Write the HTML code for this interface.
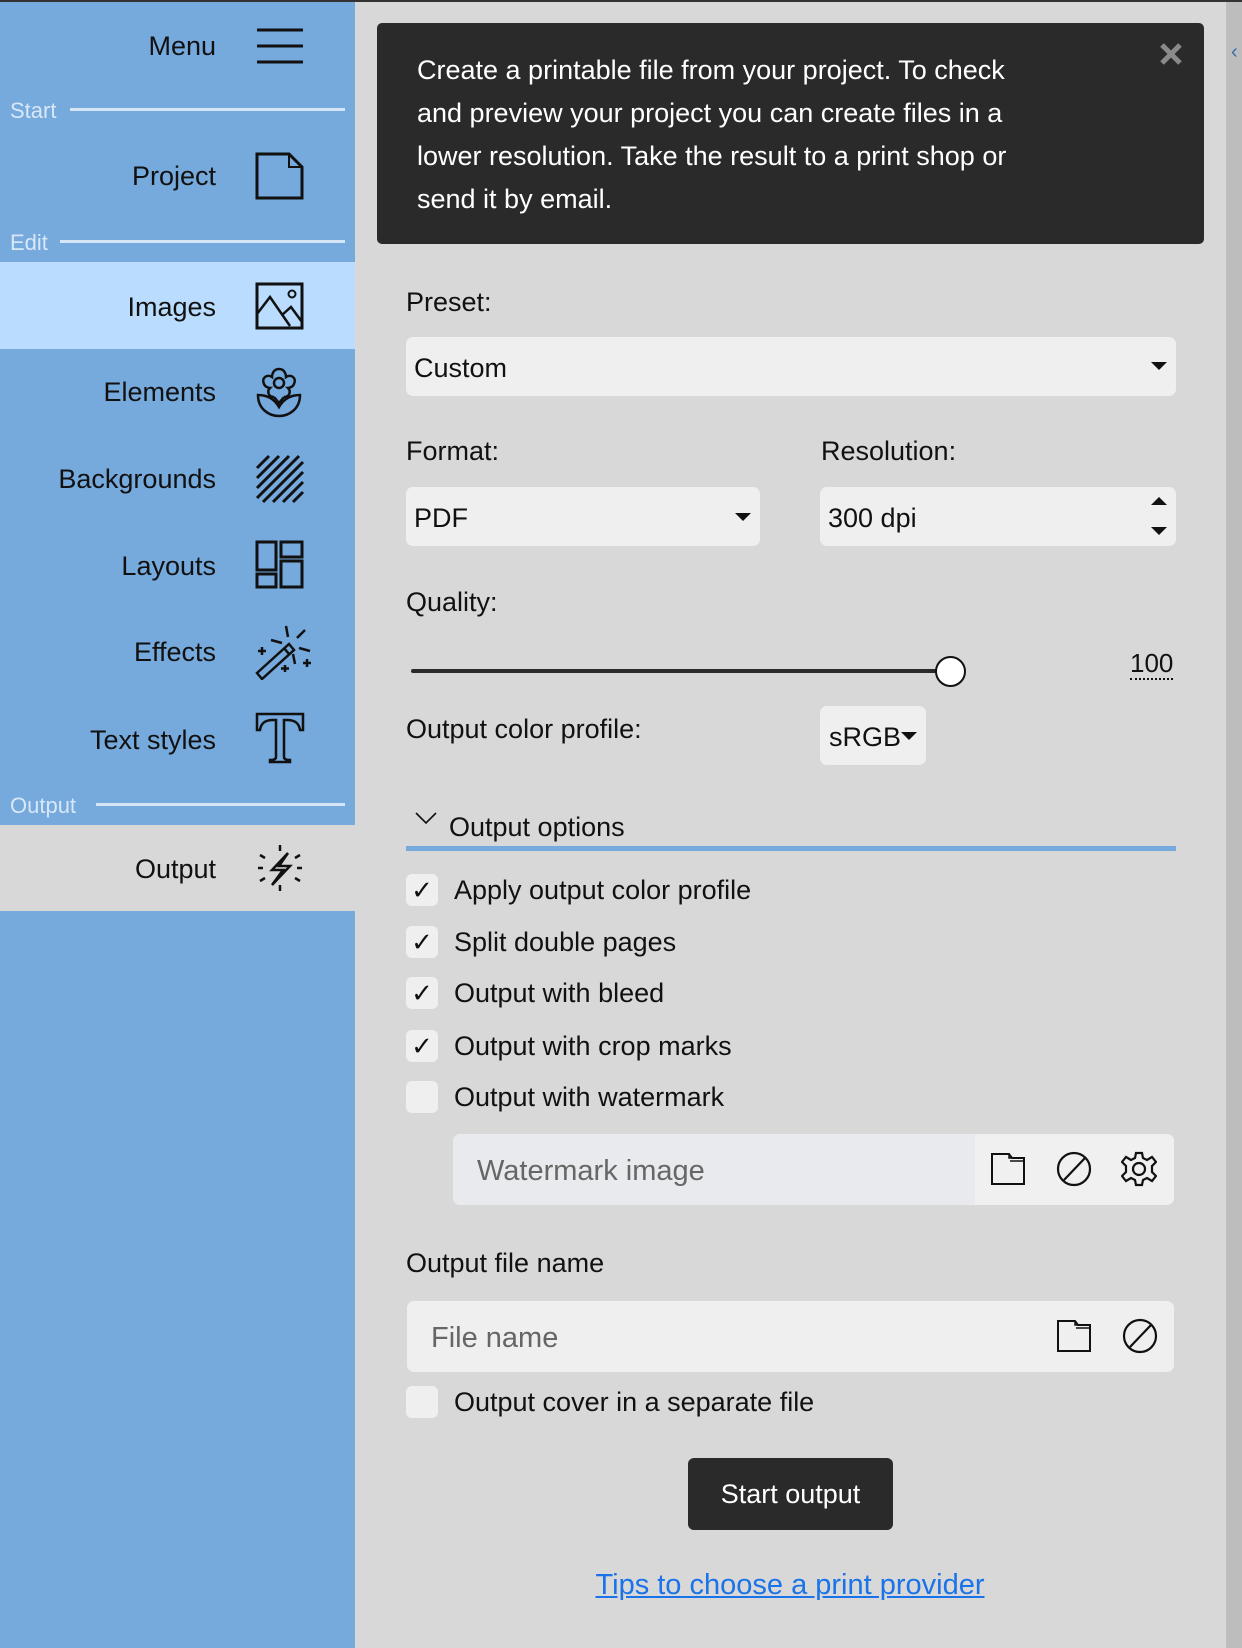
<!DOCTYPE html>
<html><head><meta charset="utf-8"><style>
*{margin:0;padding:0;box-sizing:border-box}
body{width:1242px;height:1648px;position:relative;overflow:hidden;background:#d8d8d8;font-family:"Liberation Sans",sans-serif;color:#111;font-size:27px}
.a{position:absolute}
#side{left:0;top:0;width:355px;height:1648px;background:#76a9dc}
.lbl{position:absolute;right:139px;font-size:27px;line-height:32px;color:#111;white-space:nowrap}
.sec{position:absolute;left:10px;font-size:22px;color:#d8e8f8;line-height:26px}
.secl{position:absolute;height:3px;background:#d6e6f7;right:10px}
.ic{position:absolute;left:255px}
.t{position:absolute;white-space:nowrap;line-height:32px}
.box{position:absolute;background:#efefef;border-radius:7px}
.cb{position:absolute;left:406px;width:32px;height:32px;background:#efefef;border-radius:6px;font-size:26px;text-align:center;line-height:32px}
.tri{position:absolute;width:0;height:0;border-left:8px solid transparent;border-right:8px solid transparent;border-top:8px solid #111}
</style></head><body>
<div class="a" style="left:0;top:0;width:1242px;height:2px;background:#333;z-index:5"></div>
<div class="a" id="side">
 <div class="lbl" style="top:30px">Menu</div>
 <svg class="ic" style="top:26px" width="50" height="40"><path d="M2 4H48M2 20H48M2 36H48" stroke="#111" stroke-width="3"/></svg>
 <div class="sec" style="top:98px">Start</div><div class="secl" style="left:70px;top:108px"></div>
 <div class="lbl" style="top:160px">Project</div>
 <svg class="ic" style="top:152px" width="50" height="48"><path d="M2 2H34L47 15V46H2Z" fill="none" stroke="#111" stroke-width="3"/><path d="M34 2V15H47" fill="none" stroke="#111" stroke-width="2"/></svg>
 <div class="sec" style="top:230px">Edit</div><div class="secl" style="left:60px;top:240px"></div>
 <div class="a" style="left:0;top:262px;width:355px;height:87px;background:#b9dcff"></div>
 <div class="lbl" style="top:291px">Images</div>
 <svg class="ic" style="top:282px" width="50" height="48"><rect x="2" y="2" width="45" height="44" fill="none" stroke="#111" stroke-width="3"/><path d="M2 32L15 15L35 44M27 33L36 25L47 40" fill="none" stroke="#111" stroke-width="2.5"/><circle cx="37" cy="12" r="3.5" fill="none" stroke="#111" stroke-width="2"/></svg>
 <div class="lbl" style="top:376px">Elements</div>
 <svg class="ic" style="top:365px" width="50" height="54"><g fill="none" stroke="#111" stroke-width="2.5"><circle cx="24" cy="18" r="5"/><path d="M24 4C30 4 31 10 31 12C35 9 42 12 39 19C38 22 34 23 33 23C36 26 35 32 29 32M24 4C18 4 17 10 17 12C13 9 6 12 9 19C10 22 14 23 15 23C12 26 13 32 19 32"/><path d="M3 30C3 44 14 51 24 51C34 51 45 44 45 30C35 30 28 35 24 42C20 35 13 30 3 30Z"/><path d="M19 32L24 38L29 32"/></g></svg>
 <div class="lbl" style="top:463px">Backgrounds</div>
 <svg class="ic" style="top:454px" width="52" height="52"><path d="M2 14L14 2M2 24L24 2M2 34L34 2M2 44L44 2M8 48L48 8M18 48L48 18M28 48L48 28M38 48L48 38" stroke="#111" stroke-width="3"/></svg>
 <div class="lbl" style="top:550px">Layouts</div>
 <svg class="ic" style="top:540px" width="50" height="50"><g fill="none" stroke="#111" stroke-width="3"><rect x="2" y="2" width="19" height="28"/><rect x="2" y="34" width="19" height="13"/><rect x="26" y="2" width="21" height="15"/><rect x="26" y="21" width="21" height="26"/></g></svg>
 <div class="lbl" style="top:636px">Effects</div>
 <svg class="ic" style="top:624px" width="60" height="56"><g fill="none" stroke="#111" stroke-width="2.5"><path d="M2 49L34 20L39 26L7 55Z"/><path d="M29 24L34 30"/><path d="M31 2L33 13M50 6L42 14M16 16L27 19M44 24L55 27M38 30L40 40M7 23V31M3 27H11M30 41V48M26 44.5H34M52 35V43M48 39H56"/></g></svg>
 <div class="lbl" style="top:724px">Text styles</div>
 <svg class="ic" style="top:712px" width="50" height="52"><path d="M2 2H48V18H45C44 11 40 8 32 8H29V45C29 47 31 48 35 48V50H15V48C19 48 21 47 21 45V8H18C10 8 6 11 5 18H2Z" fill="none" stroke="#111" stroke-width="2.5"/></svg>
 <div class="sec" style="top:793px">Output</div><div class="secl" style="left:96px;top:803px"></div>
 <div class="a" style="left:0;top:825px;width:355px;height:86px;background:#d8d8d8"></div>
 <div class="lbl" style="top:853px">Output</div>
 <svg class="ic" style="top:843px" width="50" height="50"><g fill="none" stroke="#111" stroke-width="2.5"><path d="M33 10L17 27H28L17 42L35 23H24Z"/><path d="M25 2V8M25 42V48M5 12L10 15M40 35L45 38M45 12L40 15M5 38L10 35M3 25H8M42 25H47"/></g></svg>
</div>
<div class="a" style="left:1226px;top:0;width:16px;height:1648px;background:#bdbdbd"></div>
<div class="t" style="left:1231px;top:36px;color:#3a6ea8;font-size:20px">‹</div>

<div class="a" style="left:377px;top:23px;width:827px;height:221px;background:#2a2a2a;border-radius:5px"></div>
<svg class="a" style="left:1159px;top:42px" width="24" height="24"><path d="M3 3L21 21M21 3L3 21" stroke="#8a8a8a" stroke-width="5"/></svg>
<div class="t" style="left:417px;top:49px;color:#fff;font-size:27px;line-height:43px;white-space:normal;width:615px">Create a printable file from your project. To check and preview your project you can create files in a lower resolution. Take the result to a print shop or send it by email.</div>

<div class="t" style="left:406px;top:286px">Preset:</div>
<div class="box" style="left:406px;top:337px;width:770px;height:59px"></div>
<div class="t" style="left:414px;top:352px">Custom</div>
<div class="tri" style="left:1151px;top:362px"></div>

<div class="t" style="left:406px;top:435px">Format:</div>
<div class="t" style="left:821px;top:435px">Resolution:</div>
<div class="box" style="left:406px;top:487px;width:354px;height:59px"></div>
<div class="t" style="left:414px;top:502px">PDF</div>
<div class="tri" style="left:735px;top:513px"></div>
<div class="box" style="left:820px;top:487px;width:356px;height:59px"></div>
<div class="t" style="left:828px;top:502px">300 dpi</div>
<div class="tri" style="left:1151px;top:497px;border-top:0;border-bottom:8px solid #111"></div>
<div class="tri" style="left:1151px;top:527px"></div>

<div class="t" style="left:406px;top:586px">Quality:</div>
<div class="a" style="left:411px;top:669px;width:540px;height:4px;background:#2a2a2a;border-radius:2px"></div>
<div class="a" style="left:935px;top:656px;width:31px;height:31px;border-radius:50%;background:#fff;border:2.5px solid #111"></div>
<div class="t" style="left:1130px;top:648px;font-size:26px;border-bottom:2px dotted #111;line-height:30px">100</div>

<div class="t" style="left:406px;top:713px">Output color profile:</div>
<div class="box" style="left:820px;top:706px;width:106px;height:59px"></div>
<div class="t" style="left:829px;top:721px">sRGB</div>
<div class="tri" style="left:901px;top:732px"></div>

<svg class="a" style="left:415px;top:812px" width="22" height="14"><path d="M1 1L11 11L21 1" fill="none" stroke="#111" stroke-width="1.6"/></svg>
<div class="t" style="left:449px;top:811px">Output options</div>
<div class="a" style="left:406px;top:846px;width:770px;height:5px;background:#76a9dc"></div>

<div class="cb" style="top:874px">✓</div><div class="t" style="left:454px;top:874px">Apply output color profile</div>
<div class="cb" style="top:926px">✓</div><div class="t" style="left:454px;top:926px">Split double pages</div>
<div class="cb" style="top:977px">✓</div><div class="t" style="left:454px;top:977px">Output with bleed</div>
<div class="cb" style="top:1030px">✓</div><div class="t" style="left:454px;top:1030px">Output with crop marks</div>
<div class="cb" style="top:1081px"></div><div class="t" style="left:454px;top:1081px">Output with watermark</div>

<div class="box" style="left:453px;top:1134px;width:721px;height:71px;background:#f0f0f0"></div>
<div class="a" style="left:453px;top:1134px;width:522px;height:71px;background:#e8eaed;border-radius:7px 0 0 7px"></div>
<div class="t" style="left:477px;top:1155px;color:#666;font-size:29px">Watermark image</div>
<svg class="a" style="left:990px;top:1152px" width="36" height="34"><path d="M2 2H19L22 6H34V32H2Z" fill="none" stroke="#111" stroke-width="2"/><path d="M19 2V6H34M20 9H34" fill="none" stroke="#111" stroke-width="1.5"/></svg>
<svg class="a" style="left:1056px;top:1151px" width="36" height="36"><circle cx="18" cy="18" r="16" fill="none" stroke="#111" stroke-width="2.2"/><path d="M8 29L29 7" stroke="#111" stroke-width="2.2"/></svg>
<svg class="a" style="left:1121px;top:1151px" width="36" height="36"><g fill="none" stroke="#111" stroke-width="2.2"><circle cx="18" cy="18" r="6"/><path d="M15 2H21L22 7L26 9L31 6L35 11L31 15V21L35 25L31 30L26 27L22 29L21 34H15L14 29L10 27L5 30L1 25L5 21V15L1 11L5 6L10 9L14 7Z"/></g></svg>

<div class="t" style="left:406px;top:1247px">Output file name</div>
<div class="box" style="left:407px;top:1301px;width:767px;height:71px"></div>
<div class="t" style="left:431px;top:1322px;color:#666;font-size:29px">File name</div>
<svg class="a" style="left:1056px;top:1319px" width="36" height="34"><path d="M2 2H19L22 6H34V32H2Z" fill="none" stroke="#111" stroke-width="2"/><path d="M19 2V6H34M20 9H34" fill="none" stroke="#111" stroke-width="1.5"/></svg>
<svg class="a" style="left:1122px;top:1318px" width="36" height="36"><circle cx="18" cy="18" r="16" fill="none" stroke="#111" stroke-width="2.2"/><path d="M8 29L29 7" stroke="#111" stroke-width="2.2"/></svg>

<div class="cb" style="top:1386px"></div><div class="t" style="left:454px;top:1386px">Output cover in a separate file</div>

<div class="a" style="left:688px;top:1458px;width:205px;height:72px;background:#2a2a2a;border-radius:6px;color:#fff;text-align:center;line-height:72px;font-size:27px">Start output</div>
<div class="t" style="left:570px;top:1569px;width:440px;text-align:center;color:#1a73e8;text-decoration:underline;font-size:29px">Tips to choose a print provider</div>
</body></html>
